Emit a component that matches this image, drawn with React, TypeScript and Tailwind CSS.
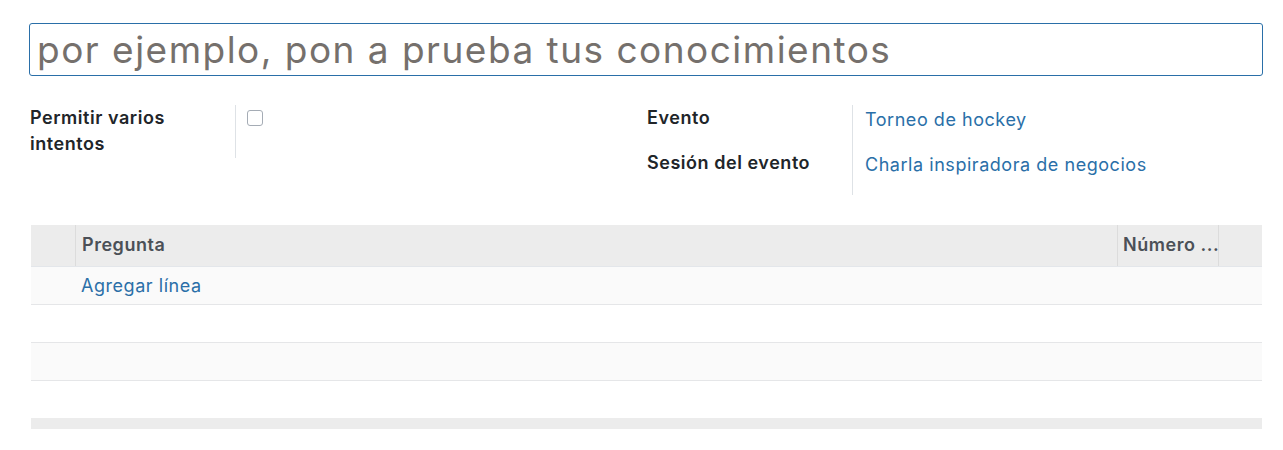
const font = { fontFamily: 'Inter, "Noto Sans", sans-serif' }

function Row({ shaded }: { shaded?: boolean }) {
    return (
        <div
            className={
                'h-[38px] border-b border-[#e5e6e8] ' +
                (shaded ? 'bg-[#fafafa]' : 'bg-white')
            }
        />
    )
}

export default function App() {
    return (
        <div
            className="bg-white min-h-[450px] pl-[29px] pr-[20px] pt-[23px] text-[18px] tracking-[0.03em] text-[#212529]"
            style={font}
        >
            {/* *Title */}
            <input
                className="block w-full h-[53px] border border-[#2a6fa8] rounded-[3px] px-[7px] text-[37px] tracking-[0.04em] text-[#212529] placeholder:text-[#75706c] outline-none"
                placeholder="por ejemplo, pon a prueba tus conocimientos"
            />

            {/* *Fields */}
            <div className="grid grid-cols-2 mt-[29px]">
                <div className="grid grid-cols-[206px_1fr] items-start">
                    <div className="font-semibold leading-[26px] pr-4 pl-px h-[53px]">
                        Permitir varios intentos
                    </div>
                    <div className="border-l border-[#dee2e6] h-[53px] pl-[11px] pt-[5px]">
                        <div className="w-[16px] h-[16px] border border-[#a5acb5] rounded-[3px] bg-white" />
                    </div>
                </div>
                <div className="grid grid-cols-[205px_1fr] pl-[1px]">
                    <div className="font-semibold leading-[26px] h-[45px]">Evento</div>
                    <div className="border-l border-[#dee2e6] pl-[12px] pt-[2px] leading-[26px] text-[#2a6fa8]">
                        Torneo de hockey
                    </div>
                    <div className="font-semibold leading-[26px] h-[45px]">
                        Sesión del evento
                    </div>
                    <div className="border-l border-[#dee2e6] pl-[12px] pt-[2px] leading-[26px] text-[#2a6fa8]">
                        Charla inspiradora de negocios
                    </div>
                </div>
            </div>

            {/* *Table */}
            <div className="mt-[30px] ml-[2px] mr-px">
                <div className="flex h-[42px] bg-[#ececec] border-b border-[#e3e6ea] font-semibold text-[#4b5057]">
                    <div className="w-[45px] border-r border-[#dcdcdc]" />
                    <div className="flex-1 px-[6px] leading-[40px]">Pregunta</div>
                    <div className="w-[101px] border-l border-[#dcdcdc] px-[5px] leading-[40px] whitespace-nowrap overflow-hidden">
                        Número ...
                    </div>
                    <div className="w-[44px] border-l border-[#dcdcdc]" />
                </div>
                <div className="h-[38px] border-b border-[#e5e6e8] bg-[#fafafa] pl-[50px] leading-[37px] text-[#2a6fa8]">
                    Agregar línea
                </div>
                <Row />
                <Row shaded />
                <div className="h-[37px] bg-white" />
                <div className="h-[11px] bg-[#ececec]" />
            </div>
        </div>
    )
}
